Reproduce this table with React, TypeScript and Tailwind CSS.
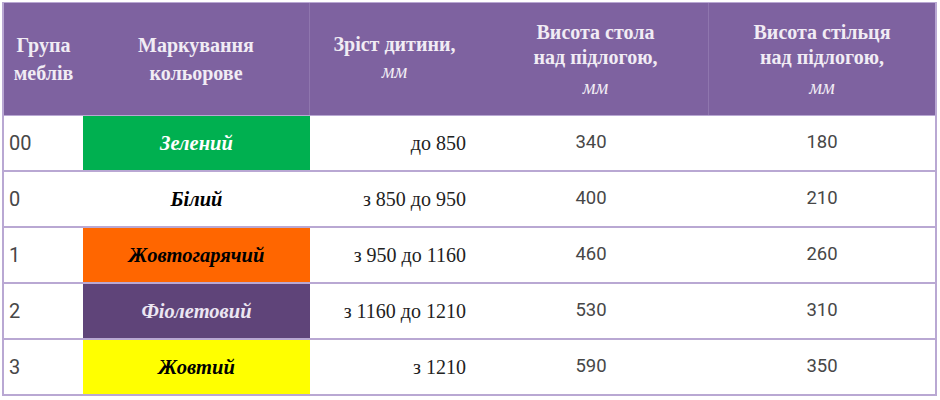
import React from "react";

const serif = { fontFamily: '"Liberation Serif", "Times New Roman", serif' };

const rows = [
  { g: "00", name: "Зелений", bg: "bg-[#00b050]", fg: "text-white", h: "до 850", t: "340", c: "180" },
  { g: "0", name: "Білий", bg: "bg-white", fg: "text-black", h: "з 850 до 950", t: "400", c: "210" },
  { g: "1", name: "Жовтогарячий", bg: "bg-[#ff6600]", fg: "text-black", h: "з 950 до 1160", t: "460", c: "260" },
  { g: "2", name: "Фіолетовий", bg: "bg-[#5f4479]", fg: "text-[#ece6f2]", h: "з 1160 до 1210", t: "530", c: "310" },
  { g: "3", name: "Жовтий", bg: "bg-[#ffff00]", fg: "text-black", h: "з 1210", t: "590", c: "350" },
];

export default function App() {
  return (
    <div className="w-[940px] h-[400px] bg-white pl-[2px] pt-[2px]">
      <div className="w-[935px] border-x-2 border-t border-[#b9a8d3]">
        <div
          className="grid grid-cols-[79px_227px_165px_234px_226px] h-[113px] bg-[#7e62a0] text-[#f1ecf4] font-bold border-b border-[#b9a8d3] text-[20px]"
          style={serif}
        >
          <div className="flex flex-col items-center justify-start text-center leading-[28px] pt-[28px]">
            <span>Група</span>
            <span>меблів</span>
          </div>
          <div className="flex flex-col items-center justify-start text-center leading-[28px] pt-[28px] border-r border-[#8f76ae]">
            <span>Маркування</span>
            <span>кольорове</span>
          </div>
          <div className="flex flex-col items-center justify-start text-center leading-[27px] pt-[28px] pl-[4px]">
            <span>Зріст дитини,</span>
            <span className="italic font-normal">мм</span>
          </div>
          <div className="flex flex-col items-center justify-start text-center leading-[25px] pt-[17px] border-r border-[#8f76ae] pl-[8px]">
            <span>Висота стола</span>
            <span>над підлогою,</span>
            <span className="italic font-normal mt-[5px]">мм</span>
          </div>
          <div className="flex flex-col items-center justify-start text-center leading-[25px] pt-[17px]">
            <span>Висота стільця</span>
            <span>над підлогою,</span>
            <span className="italic font-normal mt-[5px]">мм</span>
          </div>
        </div>
        {rows.map((r) => (
          <div
            key={r.g}
            className="grid grid-cols-[79px_227px_165px_234px_226px] h-[56px] border-b-2 border-[#b9a8d3]"
          >
            <div
              className="flex items-center pl-[5px] text-[20px] text-[#474747]"
              style={{ fontFamily: "Roboto, sans-serif" }}
            >
              {r.g}
            </div>
            <div
              className={`flex items-center justify-center ${r.bg} ${r.fg} font-bold italic text-[20.5px]`}
              style={serif}
            >
              {r.name}
            </div>
            <div
              className="flex items-center justify-end pr-[9px] text-[20px] text-[#222]"
              style={serif}
            >
              {r.h}
            </div>
            <div
              className="flex items-center justify-center text-[18.5px] text-[#474747] pr-[2px]"
              style={{ fontFamily: "Roboto, sans-serif" }}
            >
              {r.t}
            </div>
            <div
              className="flex items-center justify-center text-[18.5px] text-[#474747]"
              style={{ fontFamily: "Roboto, sans-serif" }}
            >
              {r.c}
            </div>
          </div>
        ))}
      </div>
    </div>
  );
}
